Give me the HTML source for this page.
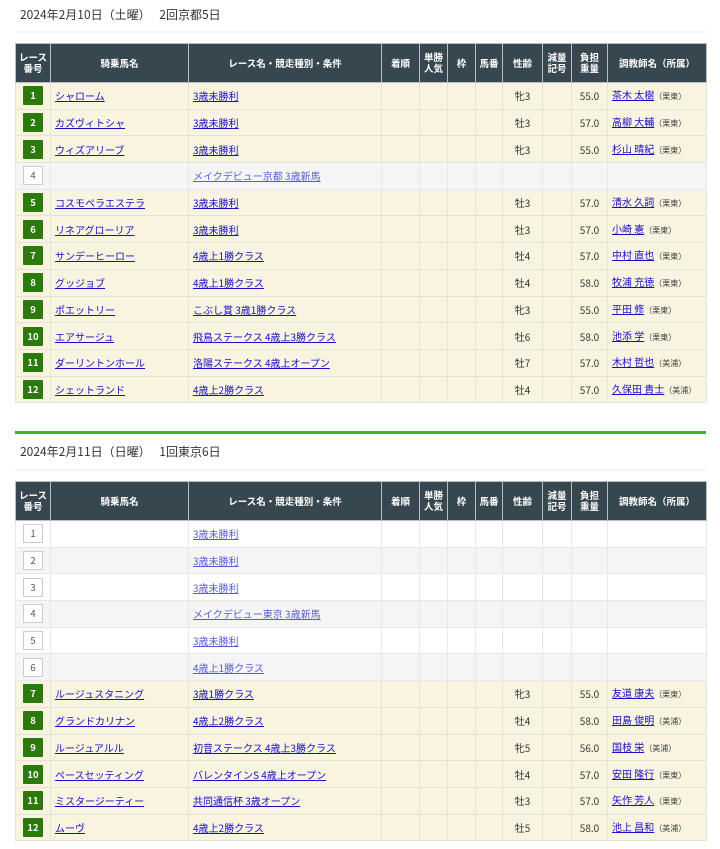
<!DOCTYPE html>
<html><head><meta charset="utf-8"><style>
*{margin:0;padding:0;box-sizing:border-box}
body{width:720px;height:849px;background:#fff;font-family:"Noto Sans CJK JP","Liberation Sans",sans-serif;color:#333;position:relative;overflow:hidden}
.t{position:absolute;left:20px;font-size:12px;color:#333;line-height:16px}
.hl{position:absolute;left:15px;width:691px;height:2px;background:#f4f4f4}
table{position:absolute;left:15px;width:691px;border-collapse:collapse;table-layout:fixed;font-size:10px;line-height:13px}
th{background:#37474f;color:#fff;font-weight:bold;height:39px;border:1px solid #b8c0c4;font-size:9.5px;line-height:11px}
td{height:26.7px;border:1px solid #e6e3d6;text-align:center;padding:0;vertical-align:middle}
tr.f td{background:#f8f4e0}
tr.w td{background:#fff;border-color:#e8e8e8}
tr.g td{background:#f5f5f5;border-color:#e8e8e8}
td.l{text-align:left;padding-left:4px}
a{color:#1a0dcc;text-decoration:underline}
tr.w a,tr.g a{color:#5a5ae0}
.b{display:inline-block;width:20px;height:19px;line-height:19px;background:#2b7a0b;color:#fff;font-weight:bold;font-size:9.5px;border-radius:1px;vertical-align:middle}
.e{display:inline-block;width:20px;height:19px;line-height:17px;background:#fff;color:#555;border:1px solid #ccc;font-size:9.5px;vertical-align:middle}
.s{font-size:8px;color:#444}
</style></head><body>
<div class="t" style="top:7px">2024年2月10日（土曜）　 2回京都5日</div>
<div class="hl" style="top:31px"></div>
<table style="top:43px">
<colgroup><col style="width:35px"><col style="width:138px"><col style="width:193px"><col style="width:38px"><col style="width:28px"><col style="width:28px"><col style="width:27px"><col style="width:40px"><col style="width:29px"><col style="width:36px"><col style="width:99px"></colgroup>
<tr><th>レース<br>番号</th><th>騎乗馬名</th><th>レース名・競走種別・条件</th><th>着順</th><th>単勝<br>人気</th><th>枠</th><th>馬番</th><th>性齢</th><th>減量<br>記号</th><th>負担<br>重量</th><th>調教師名（所属）</th></tr>
<tr class="f"><td><span class="b">1</span></td><td class="l"><a>シャローム</a></td><td class="l"><a>3歳未勝利</a></td><td></td><td></td><td></td><td></td><td>牝3</td><td></td><td>55.0</td><td class="l"><a>茶木 太樹</a><span class="s">（栗東）</span></td></tr>
<tr class="f"><td><span class="b">2</span></td><td class="l"><a>カズヴィトシャ</a></td><td class="l"><a>3歳未勝利</a></td><td></td><td></td><td></td><td></td><td>牡3</td><td></td><td>57.0</td><td class="l"><a>高柳 大輔</a><span class="s">（栗東）</span></td></tr>
<tr class="f"><td><span class="b">3</span></td><td class="l"><a>ウィズアリーブ</a></td><td class="l"><a>3歳未勝利</a></td><td></td><td></td><td></td><td></td><td>牝3</td><td></td><td>55.0</td><td class="l"><a>杉山 晴紀</a><span class="s">（栗東）</span></td></tr>
<tr class="g"><td><span class="e">4</span></td><td></td><td class="l"><a>メイクデビュー京都 3歳新馬</a></td><td></td><td></td><td></td><td></td><td></td><td></td><td></td><td></td></tr>
<tr class="f"><td><span class="b">5</span></td><td class="l"><a>コスモペラエステラ</a></td><td class="l"><a>3歳未勝利</a></td><td></td><td></td><td></td><td></td><td>牡3</td><td></td><td>57.0</td><td class="l"><a>清水 久詞</a><span class="s">（栗東）</span></td></tr>
<tr class="f"><td><span class="b">6</span></td><td class="l"><a>リネアグローリア</a></td><td class="l"><a>3歳未勝利</a></td><td></td><td></td><td></td><td></td><td>牡3</td><td></td><td>57.0</td><td class="l"><a>小崎 憲</a><span class="s">（栗東）</span></td></tr>
<tr class="f"><td><span class="b">7</span></td><td class="l"><a>サンデーヒーロー</a></td><td class="l"><a>4歳上1勝クラス</a></td><td></td><td></td><td></td><td></td><td>牡4</td><td></td><td>57.0</td><td class="l"><a>中村 直也</a><span class="s">（栗東）</span></td></tr>
<tr class="f"><td><span class="b">8</span></td><td class="l"><a>グッジョブ</a></td><td class="l"><a>4歳上1勝クラス</a></td><td></td><td></td><td></td><td></td><td>牡4</td><td></td><td>58.0</td><td class="l"><a>牧浦 充徳</a><span class="s">（栗東）</span></td></tr>
<tr class="f"><td><span class="b">9</span></td><td class="l"><a>ポエットリー</a></td><td class="l"><a>こぶし賞 3歳1勝クラス</a></td><td></td><td></td><td></td><td></td><td>牝3</td><td></td><td>55.0</td><td class="l"><a>平田 修</a><span class="s">（栗東）</span></td></tr>
<tr class="f"><td><span class="b">10</span></td><td class="l"><a>エアサージュ</a></td><td class="l"><a>飛鳥ステークス 4歳上3勝クラス</a></td><td></td><td></td><td></td><td></td><td>牡6</td><td></td><td>58.0</td><td class="l"><a>池添 学</a><span class="s">（栗東）</span></td></tr>
<tr class="f"><td><span class="b">11</span></td><td class="l"><a>ダーリントンホール</a></td><td class="l"><a>洛陽ステークス 4歳上オープン</a></td><td></td><td></td><td></td><td></td><td>牡7</td><td></td><td>57.0</td><td class="l"><a>木村 哲也</a><span class="s">（美浦）</span></td></tr>
<tr class="f"><td><span class="b">12</span></td><td class="l"><a>シェットランド</a></td><td class="l"><a>4歳上2勝クラス</a></td><td></td><td></td><td></td><td></td><td>牡4</td><td></td><td>57.0</td><td class="l"><a>久保田 貴士</a><span class="s">（美浦）</span></td></tr>
</table>
<div style="position:absolute;left:15px;top:431px;width:691px;height:3px;background:#3cb43c"></div>
<div class="t" style="top:444px">2024年2月11日（日曜）　 1回東京6日</div>
<div class="hl" style="top:469px"></div>
<table style="top:481px">
<colgroup><col style="width:35px"><col style="width:138px"><col style="width:193px"><col style="width:38px"><col style="width:28px"><col style="width:28px"><col style="width:27px"><col style="width:40px"><col style="width:29px"><col style="width:36px"><col style="width:99px"></colgroup>
<tr><th>レース<br>番号</th><th>騎乗馬名</th><th>レース名・競走種別・条件</th><th>着順</th><th>単勝<br>人気</th><th>枠</th><th>馬番</th><th>性齢</th><th>減量<br>記号</th><th>負担<br>重量</th><th>調教師名（所属）</th></tr>
<tr class="w"><td><span class="e">1</span></td><td></td><td class="l"><a>3歳未勝利</a></td><td></td><td></td><td></td><td></td><td></td><td></td><td></td><td></td></tr>
<tr class="g"><td><span class="e">2</span></td><td></td><td class="l"><a>3歳未勝利</a></td><td></td><td></td><td></td><td></td><td></td><td></td><td></td><td></td></tr>
<tr class="w"><td><span class="e">3</span></td><td></td><td class="l"><a>3歳未勝利</a></td><td></td><td></td><td></td><td></td><td></td><td></td><td></td><td></td></tr>
<tr class="g"><td><span class="e">4</span></td><td></td><td class="l"><a>メイクデビュー東京 3歳新馬</a></td><td></td><td></td><td></td><td></td><td></td><td></td><td></td><td></td></tr>
<tr class="w"><td><span class="e">5</span></td><td></td><td class="l"><a>3歳未勝利</a></td><td></td><td></td><td></td><td></td><td></td><td></td><td></td><td></td></tr>
<tr class="g"><td><span class="e">6</span></td><td></td><td class="l"><a>4歳上1勝クラス</a></td><td></td><td></td><td></td><td></td><td></td><td></td><td></td><td></td></tr>
<tr class="f"><td><span class="b">7</span></td><td class="l"><a>ルージュスタニング</a></td><td class="l"><a>3歳1勝クラス</a></td><td></td><td></td><td></td><td></td><td>牝3</td><td></td><td>55.0</td><td class="l"><a>友道 康夫</a><span class="s">（栗東）</span></td></tr>
<tr class="f"><td><span class="b">8</span></td><td class="l"><a>グランドカリナン</a></td><td class="l"><a>4歳上2勝クラス</a></td><td></td><td></td><td></td><td></td><td>牡4</td><td></td><td>58.0</td><td class="l"><a>田島 俊明</a><span class="s">（美浦）</span></td></tr>
<tr class="f"><td><span class="b">9</span></td><td class="l"><a>ルージュアルル</a></td><td class="l"><a>初音ステークス 4歳上3勝クラス</a></td><td></td><td></td><td></td><td></td><td>牝5</td><td></td><td>56.0</td><td class="l"><a>国枝 栄</a><span class="s">（美浦）</span></td></tr>
<tr class="f"><td><span class="b">10</span></td><td class="l"><a>ペースセッティング</a></td><td class="l"><a>バレンタインS 4歳上オープン</a></td><td></td><td></td><td></td><td></td><td>牡4</td><td></td><td>57.0</td><td class="l"><a>安田 隆行</a><span class="s">（栗東）</span></td></tr>
<tr class="f"><td><span class="b">11</span></td><td class="l"><a>ミスタージーティー</a></td><td class="l"><a>共同通信杯 3歳オープン</a></td><td></td><td></td><td></td><td></td><td>牡3</td><td></td><td>57.0</td><td class="l"><a>矢作 芳人</a><span class="s">（栗東）</span></td></tr>
<tr class="f"><td><span class="b">12</span></td><td class="l"><a>ムーヴ</a></td><td class="l"><a>4歳上2勝クラス</a></td><td></td><td></td><td></td><td></td><td>牡5</td><td></td><td>58.0</td><td class="l"><a>池上 昌和</a><span class="s">（美浦）</span></td></tr>
</table>
</body></html>
